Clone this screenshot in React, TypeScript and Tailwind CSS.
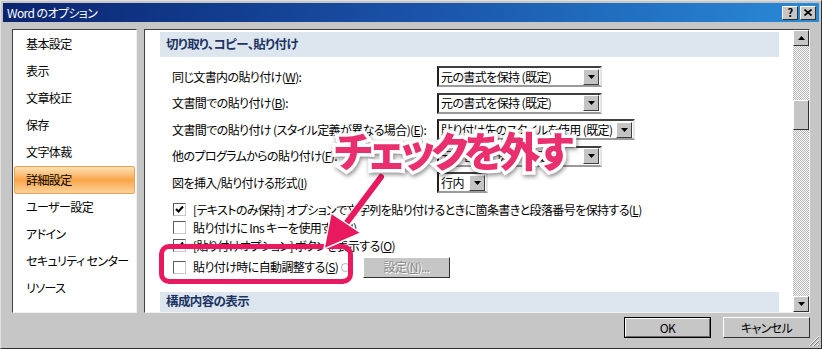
import type { ReactNode } from 'react'

const navItems = ['基本設定', '表示', '文章校正', '保存', '文字体裁', '詳細設定', 'ユーザー設定', 'アドイン', 'セキュリティ センター', 'リソース']

// small black triangle used in dropdowns and scroll arrows
function Tri({ down = true }: { down?: boolean }) {
  return (
    <svg width="7" height="4" viewBox="0 0 7 4">
      {down ? <polygon points="0,0 7,0 3.5,4" fill="#000" /> : <polygon points="0,4 7,4 3.5,0" fill="#000" />}
    </svg>
  )
}

function Select({ text, className }: { text: ReactNode; className: string }) {
  return (
    <div className={`flex h-[21px] items-center justify-between border-2 border-t-[#404040] border-l-[#202020] border-r-[#e4e4e4] border-b-[#9a9a9a] bg-white pr-[1px] pl-[2px] ${className}`}>
      <span className="whitespace-nowrap">{text}</span>
      <span className="flex h-[16px] w-[16px] shrink-0 items-center justify-center border border-t-white border-l-white border-r-[#404040] border-b-[#404040] bg-[#c4c4c4]">
        <Tri />
      </span>
    </div>
  )
}

function Check({ on }: { on?: boolean }) {
  return (
    <span className="flex h-[13px] w-[13px] shrink-0 items-center justify-center border border-t-[#5a5a5a] border-l-[#5a5a5a] border-r-[#c8c8c8] border-b-[#c8c8c8] bg-white">
      {on && (
        <svg width="9" height="9" viewBox="0 0 9 9">
          <path d="M1 4 L3.5 6.5 L8 1.5" stroke="#000" strokeWidth="2" fill="none" />
        </svg>
      )}
    </span>
  )
}

function Row({ label, children }: { label: ReactNode; children: ReactNode }) {
  return (
    <div className="flex h-[26.5px] items-start">
      <div className="flex h-[21px] w-[265px] items-center whitespace-nowrap">{label}</div>
      {children}
    </div>
  )
}

function CheckRow({ on, children }: { on?: boolean; children: ReactNode }) {
  return (
    <div className="flex h-[18px] items-center gap-[7px] pl-[1px]">
      <Check on={on} />
      <span className="whitespace-nowrap">{children}</span>
    </div>
  )
}

function WinButton({ children, def }: { children: ReactNode; def?: boolean }) {
  return (
    <div className={`flex h-[21px] w-[87px] items-center justify-center border ${def ? 'border-black' : 'border-t-white border-l-white border-r-[#303030] border-b-[#303030]'} bg-[#c6c6c6]`}>
      <div className={`flex h-full w-full items-center justify-center ${def ? 'border border-t-white border-l-white border-r-[#6a6a6a] border-b-[#6a6a6a]' : ''}`}>{children}</div>
    </div>
  )
}

export default function App() {
  return (
    <div className="relative flex h-[349px] w-[822px] flex-col overflow-hidden border border-t-[#e0e0e0] border-l-[#e0e0e0] border-r-[#303030] border-b-[#303030] bg-[#c6c6c6] font-['Noto_Sans_CJK_JP',sans-serif] text-[12px] leading-none tracking-[-0.6px] text-black [font-feature-settings:'palt']">
      {/* Title bar */}
      <div className="mx-[2px] mt-[2px] flex h-[19px] items-center justify-between bg-gradient-to-r from-[#0b2470] via-[#1a52a8] to-[#2a8ad6] pl-[4px] pr-[3px]">
        <span className="text-[12px] text-white">Word のオプション</span>
        <div className="flex gap-[2px]">
          <span className="flex h-[14px] w-[16px] items-center justify-center border border-t-white border-l-white border-r-[#303030] border-b-[#303030] bg-[#c6c6c6] text-[11px] font-bold">?</span>
          <span className="flex h-[14px] w-[16px] items-center justify-center border border-t-white border-l-white border-r-[#303030] border-b-[#303030] bg-[#c6c6c6]">
            <svg width="8" height="7" viewBox="0 0 8 7">
              <path d="M0.5 0.5 L7.5 6.5 M7.5 0.5 L0.5 6.5" stroke="#000" strokeWidth="1.6" />
            </svg>
          </span>
        </div>
      </div>

      {/* Body */}
      <div className="mt-[7px] flex h-[284px] pl-[11px] pr-[11px]">
        {/* Left nav */}
        <div className="h-full w-[125px] border border-t-[#404040] border-l-[#404040] border-r-[#f0f0f0] border-b-[#f0f0f0] bg-white">
          {navItems.map((n) => (
            <div key={n} className="flex h-[27.2px] items-center whitespace-nowrap px-[1px]">
              {n === '詳細設定' ? (
                <div className="flex h-[28px] w-full items-center rounded-[2px] border border-[#e7a35a] bg-gradient-to-b from-[#fde2b4] via-[#f8a547] to-[#fcd39a] pl-[11px]">{n}</div>
              ) : (
                <span className="pl-[12px]">{n}</span>
              )}
            </div>
          ))}
        </div>

        {/* Right panel */}
        <div className="ml-[7px] flex h-full flex-1 border border-t-[#404040] border-l-[#404040] border-r-[#f0f0f0] border-b-[#f0f0f0] bg-white">
          <div className="flex-1 pl-[15px] pr-[14px] pt-[2px]">
            <div className="flex h-[25px] items-center bg-[#dde6ee] pl-[6px] text-[12.5px] font-bold text-[#1b3463]">切り取り、コピー、貼り付け</div>
            <div className="pl-[12px] pt-[9px]">
              <Row label={<>同じ文書内の貼り付け(<u>W</u>):</>}>
                <Select className="w-[165px]" text="元の書式を保持 (既定)" />
              </Row>
              <Row label={<>文書間での貼り付け(<u>B</u>):</>}>
                <Select className="w-[165px]" text="元の書式を保持 (既定)" />
              </Row>
              <Row label={<>文書間での貼り付け (スタイル定義が異なる場合)(<u>E</u>):</>}>
                <Select className="w-[198px]" text="貼り付け先のスタイルを使用 (既定)" />
              </Row>
              <Row label={<>他のプログラムからの貼り付け(<u>F</u>):</>}>
                <Select className="w-[165px]" text="元の書式を保持 (既定)" />
              </Row>
              <Row label={<>図を挿入/貼り付ける形式(<u>I</u>)</>}>
                <Select className="w-[51px]" text="行内" />
              </Row>
              <div className="pt-[2px]">
                <CheckRow on>[テキストのみ保持] オプションで文字列を貼り付けるときに箇条書きと段落番号を保持する(<u>L</u>)</CheckRow>
                <CheckRow>貼り付けに Ins キーを使用する(<u>U</u>)</CheckRow>
                <CheckRow on>[貼り付けオプション] ボタンを表示する(<u>O</u>)</CheckRow>
                <div className="flex h-[25px] items-center pl-[1px]">
                  <Check />
                  <div className="ml-[7px] flex w-[170px] items-center gap-[3px] whitespace-nowrap">
                    <span>貼り付け時に自動調整する(<u>S</u>)</span>
                    <span className="h-[9px] w-[9px] rounded-full border border-[#b0b0b0]" />
                  </div>
                  <div className="flex h-[21px] w-[87px] items-center justify-center border border-t-white border-l-white border-r-[#303030] border-b-[#303030] bg-[#c6c6c6] text-[#8a8a8a] [text-shadow:1px_1px_0_#fff]">設定(<u>N</u>)...</div>
                </div>
              </div>
            </div>
            <div className="mt-[12px] flex h-[20px] items-center bg-[#dde6ee] pl-[6px] text-[12.5px] font-bold text-[#1b3463]">構成内容の表示</div>
          </div>

          {/* Scrollbar */}
          <div className="flex w-[16px] flex-col bg-[repeating-conic-gradient(#b4b4b4_0%_25%,#ffffff_0%_50%)] [background-size:2px_2px]">
            <div className="flex h-[16px] items-center justify-center border border-t-white border-l-white border-r-[#303030] border-b-[#303030] bg-[#c6c6c6]">
              <Tri down={false} />
            </div>
            <div className="mt-[54px] h-[30px] border border-t-white border-l-white border-r-[#303030] border-b-[#303030] bg-[#c6c6c6]" />
            <div className="flex-1" />
            <div className="flex h-[16px] items-center justify-center border border-t-white border-l-white border-r-[#303030] border-b-[#303030] bg-[#c6c6c6]">
              <Tri />
            </div>
          </div>
        </div>
      </div>

      {/* Bottom buttons */}
      <div className="flex justify-end gap-[12px] pr-[11px] pt-[4px]">
        <WinButton def>OK</WinButton>
        <WinButton>キャンセル</WinButton>
      </div>

      {/* resize grip */}
      <svg className="absolute right-[1px] bottom-[1px]" width="12" height="12" viewBox="0 0 12 12">
        <path d="M11 1 L1 11 M11 5 L5 11 M11 9 L9 11" stroke="#fff" strokeWidth="1" />
        <path d="M11 2 L2 11 M11 6 L6 11 M11 10 L10 11" stroke="#7a7a7a" strokeWidth="1" />
      </svg>

      {/* Annotation */}
      <div className="pointer-events-none absolute left-[158px] top-[243px] h-[40px] w-[194px] rounded-[10px] border-[5px] border-[#e8195e]" />
      <svg className="pointer-events-none absolute left-0 top-0" width="822" height="349" viewBox="0 0 822 349">
        <path d="M380 176 L346 222" stroke="#fff" strokeWidth="9" strokeLinecap="round" opacity="0.8" />
        <path d="M380 176 L344 224" stroke="#e8195e" strokeWidth="6" strokeLinecap="round" />
        <polygon points="323,248 330,212 360,232" fill="#e8195e" stroke="#fff" strokeWidth="1.5" strokeLinejoin="round" />
      </svg>
      <div className="pointer-events-none absolute left-[333px] top-[128px] whitespace-nowrap text-[41px] font-black leading-none tracking-[-4px] text-[#ea2f6e] [paint-order:stroke_fill] [-webkit-text-stroke:7px_#ffffff] [filter:drop-shadow(1px_2px_2px_rgba(0,0,0,0.45))]">
        チェックを外す
      </div>
    </div>
  )
}
